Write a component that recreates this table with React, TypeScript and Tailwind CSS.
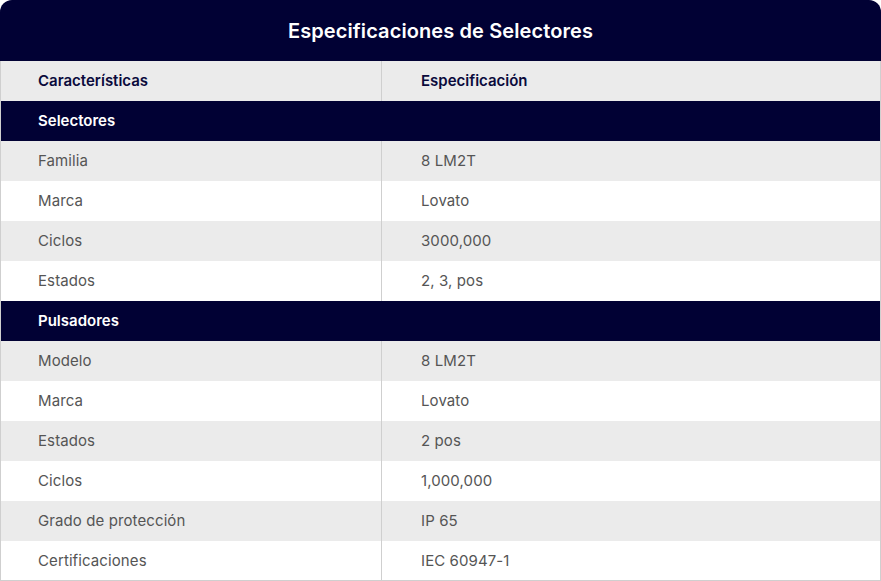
const rows: ({ section: string } | { k: string; v: string })[] = [
  { section: 'Selectores' },
  { k: 'Familia', v: '8 LM2T' },
  { k: 'Marca', v: 'Lovato' },
  { k: 'Ciclos', v: '3000,000' },
  { k: 'Estados', v: '2, 3, pos' },
  { section: 'Pulsadores' },
  { k: 'Modelo', v: '8 LM2T' },
  { k: 'Marca', v: 'Lovato' },
  { k: 'Estados', v: '2 pos' },
  { k: 'Ciclos', v: '1,000,000' },
  { k: 'Grado de protección', v: 'IP 65' },
  { k: 'Certificaciones', v: 'IEC 60947-1' },
]

export default function App() {
  let i = 0
  return (
    <div className="w-[881px] h-[581px] bg-white font-['Inter',sans-serif]">
      <div className="h-[61px] bg-[#010134] rounded-t-[12px] flex items-center justify-center">
        <h1 className="text-white text-[20px] font-semibold tracking-[0.1px] pt-px">Especificaciones de Selectores</h1>
      </div>
      <div className="h-[520px] flex flex-col border-x border-b border-[#cfcfcf] overflow-hidden">
        <div className="h-10 shrink-0 bg-[#ebebeb] grid grid-cols-[381px_1fr] text-[15px] font-semibold text-[#0a0a3c]">
          <div className="pl-[37px] pt-px flex items-center border-r border-[#cfcfcf]">Características</div>
          <div className="pl-[39px] pt-px flex items-center">Especificación</div>
        </div>
        {rows.map((r, idx) => {
          if ('section' in r) {
            i = 0
            return (
              <div key={idx} className="h-10 shrink-0 bg-[#010134] flex items-center pl-[37px] pt-px text-white text-[15px] font-semibold">
                {r.section}
              </div>
            )
          }
          const gray = i % 2 === 0
          i++
          return (
            <div
              key={idx}
              className={gray ? 'h-10 shrink-0 bg-[#ebebeb] grid grid-cols-[381px_1fr] text-[15px] text-[#555] tracking-[0.1px]' : 'h-10 shrink-0 bg-white grid grid-cols-[381px_1fr] text-[15px] text-[#555] tracking-[0.1px]'}
            >
              <div className="pl-[37px] pt-px flex items-center border-r border-[#cfcfcf]">{r.k}</div>
              <div className="pl-[39px] pt-px flex items-center">{r.v}</div>
            </div>
          )
        })}
      </div>
    </div>
  )
}
